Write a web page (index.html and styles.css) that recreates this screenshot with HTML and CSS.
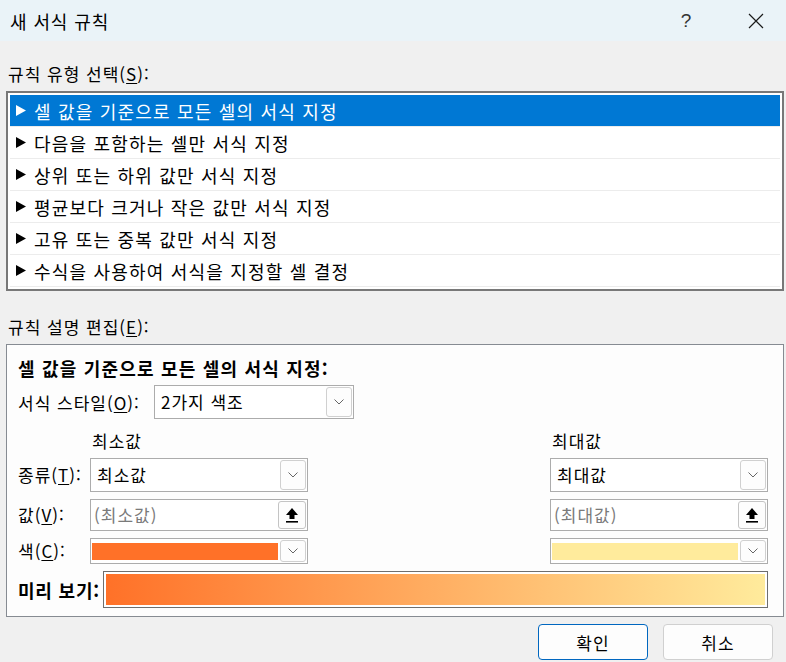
FILE: index.html
```html
<!DOCTYPE html>
<html lang="ko">
<head>
<meta charset="utf-8">
<title>새 서식 규칙</title>
<link rel="stylesheet" href="styles.css">
</head>
<body>
<div class="dialog">
  <div class="titlebar">
    <span class="title">새 서식 규칙</span>
    <span class="help">?</span>
    <span class="close">
      <svg width="16" height="16" viewBox="0 0 16 16"><path d="M1 1 L15 15 M15 1 L1 15" stroke="#1a1a1a" stroke-width="1.2" fill="none"/></svg>
    </span>
  </div>

  <div class="sect-label">규칙 유형 선택(<u>S</u>):</div>
  <div class="listbox">
    <div class="item selected"><svg class="tri" width="10" height="11" viewBox="0 0 10 11"><polygon points="0,0 10,5.5 0,11" fill="#fff"/></svg>셀 값을 기준으로 모든 셀의 서식 지정</div>
    <div class="item"><svg class="tri" width="10" height="11" viewBox="0 0 10 11"><polygon points="0,0 10,5.5 0,11" fill="#000"/></svg>다음을 포함하는 셀만 서식 지정</div>
    <div class="item"><svg class="tri" width="10" height="11" viewBox="0 0 10 11"><polygon points="0,0 10,5.5 0,11" fill="#000"/></svg>상위 또는 하위 값만 서식 지정</div>
    <div class="item"><svg class="tri" width="10" height="11" viewBox="0 0 10 11"><polygon points="0,0 10,5.5 0,11" fill="#000"/></svg>평균보다 크거나 작은 값만 서식 지정</div>
    <div class="item"><svg class="tri" width="10" height="11" viewBox="0 0 10 11"><polygon points="0,0 10,5.5 0,11" fill="#000"/></svg>고유 또는 중복 값만 서식 지정</div>
    <div class="item"><svg class="tri" width="10" height="11" viewBox="0 0 10 11"><polygon points="0,0 10,5.5 0,11" fill="#000"/></svg>수식을 사용하여 서식을 지정할 셀 결정</div>
  </div>

  <div class="sect-label second">규칙 설명 편집(<u>E</u>):</div>
  <div class="descbox">
    <div class="dtitle">셀 값을 기준으로 모든 셀의 서식 지정:</div>
    <div class="style-row">
      <span class="style-label">서식 스타일(<u>O</u>):</span>
      <div class="combo style-combo">
        <span class="val">2가지 색조</span>
        <span class="dd"><svg width="10" height="6" viewBox="0 0 10 6"><polyline points="0.5,0.5 5,5 9.5,0.5" fill="none" stroke="#666" stroke-width="1"/></svg></span>
      </div>
    </div>

    <div class="grid">
      <span></span>
      <span class="colhead">최소값</span>
      <span></span>
      <span class="colhead">최대값</span>

      <span class="rlabel">종류(<u>T</u>):</span>
      <div class="combo">
        <span class="val">최소값</span>
        <span class="dd"><svg width="10" height="6" viewBox="0 0 10 6"><polyline points="0.5,0.5 5,5 9.5,0.5" fill="none" stroke="#666" stroke-width="1"/></svg></span>
      </div>
      <span></span>
      <div class="combo">
        <span class="val">최대값</span>
        <span class="dd"><svg width="10" height="6" viewBox="0 0 10 6"><polyline points="0.5,0.5 5,5 9.5,0.5" fill="none" stroke="#666" stroke-width="1"/></svg></span>
      </div>

      <span class="rlabel">값(<u>V</u>):</span>
      <div class="combo field">
        <span class="val ph">(최소값)</span>
        <span class="dd up"><svg width="14" height="16" viewBox="0 0 14 16"><polygon points="7,1 13,8 9.5,8 9.5,12 4.5,12 4.5,8 1,8" fill="#000"/><rect x="1" y="14" width="12" height="1.6" fill="#000"/></svg></span>
      </div>
      <span></span>
      <div class="combo field">
        <span class="val ph">(최대값)</span>
        <span class="dd up"><svg width="14" height="16" viewBox="0 0 14 16"><polygon points="7,1 13,8 9.5,8 9.5,12 4.5,12 4.5,8 1,8" fill="#000"/><rect x="1" y="14" width="12" height="1.6" fill="#000"/></svg></span>
      </div>

      <span class="rlabel">색(<u>C</u>):</span>
      <div class="combo color">
        <span class="swatch orange"></span>
        <span class="dd"><svg width="10" height="6" viewBox="0 0 10 6"><polyline points="0.5,0.5 5,5 9.5,0.5" fill="none" stroke="#666" stroke-width="1"/></svg></span>
      </div>
      <span></span>
      <div class="combo color">
        <span class="swatch yellow"></span>
        <span class="dd"><svg width="10" height="6" viewBox="0 0 10 6"><polyline points="0.5,0.5 5,5 9.5,0.5" fill="none" stroke="#666" stroke-width="1"/></svg></span>
      </div>
    </div>

    <div class="preview-row">
      <span class="plabel">미리 보기:</span>
      <div class="preview"><div class="grad"></div></div>
    </div>
  </div>

  <div class="buttons">
    <button class="btn primary">확인</button>
    <button class="btn">취소</button>
  </div>
</div>
</body>
</html>
```

FILE: styles.css
```css
* { box-sizing: border-box; }

html, body {
  margin: 0;
  padding: 0;
}

body {
  width: 786px;
  height: 662px;
  overflow: hidden;
  background: #f0f0f0;
  font-family: "Noto Sans CJK KR", "Noto Sans", sans-serif;
  font-size: 17px;
  color: #000;
  letter-spacing: 1px;
}

u { text-decoration: underline; text-underline-offset: 2px; }

.titlebar {
  height: 41px;
  background: #eaf3f8;
  display: flex;
  align-items: center;
  padding-left: 10px;
}

.title {
  font-size: 18px;
  letter-spacing: 0.9px;
  line-height: 20px;
}

.help {
  margin-left: auto;
  width: 20px;
  text-align: center;
  font-family: "Liberation Sans", sans-serif;
  font-size: 19px;
  color: #333;
  letter-spacing: 0;
}

.close {
  width: 46px;
  margin-left: 37px;
  margin-right: 7px;
  display: flex;
  justify-content: center;
  align-items: center;
}

.sect-label {
  margin: 23px 0 7px 8px;
  line-height: 20px;
  height: 20px;
}

.sect-label.second {
  margin-top: 26px;
}

.listbox {
  margin-left: 6px;
  width: 778px;
  border: 2px solid #787878;
  background: #fff;
  padding: 2px;
}

.item {
  height: 32px;
  border-bottom: 1px solid #ececec;
  display: flex;
  align-items: center;
  padding-left: 6px;
  line-height: 20px;
  font-size: 18px;
  letter-spacing: 1.2px;
}

.item .tri {
  margin-right: 8px;
  flex: none;
}

.item.selected {
  background: #0078d4;
  color: #fff;
}

.descbox {
  margin-left: 6px;
  width: 778px;
  height: 273px;
  border: 1px solid #868b92;
  background: #fdfdfd;
  padding: 12px 15px 0 11px;
}

.dtitle {
  font-weight: bold;
  font-size: 18px;
  line-height: 22px;
  height: 22px;
  letter-spacing: 1.2px;
}

.style-row {
  margin-top: 6px;
  display: flex;
  align-items: center;
}

.style-label {
  width: 136px;
}

.combo {
  display: flex;
  align-items: center;
  border: 1px solid #acacac;
  background: #fff;
  padding: 1px;
  height: 34px;
}

.style-combo {
  width: 200px;
}

.combo .val {
  flex: 1;
  padding-left: 5px;
  line-height: 20px;
}

.combo .val.ph {
  color: #7a7a7a;
  padding-left: 2px;
}

.combo .dd {
  width: 26px;
  height: 100%;
  border: 1px solid #d0d0d0;
  border-radius: 3px;
  background: #fdfdfd;
  display: flex;
  align-items: center;
  justify-content: center;
  flex: none;
}

.combo .dd.up {
  width: 28px;
  border-color: #c4c4c4;
}

.grid {
  margin-top: 12px;
  display: grid;
  grid-template-columns: 72px 218px 1fr 218px;
  grid-template-rows: 20px 34px 32px 26px;
  row-gap: 7px;
  align-items: center;
}

.colhead {
  padding-left: 2px;
  line-height: 20px;
}

.rlabel {
  line-height: 20px;
}

.combo.field {
  height: 32px;
}

.combo.color {
  height: 26px;
  padding: 3px 1px 3px 1px;
}

.combo.color .dd {
  height: 22px;
  margin-top: -1px;
  margin-bottom: -1px;
}

.swatch {
  flex: 1;
  height: 17px;
  margin-right: 2px;
}

.swatch.orange { background: #ff7128; }
.swatch.yellow { background: #ffeb9c; }

.preview-row {
  margin-top: 7px;
  display: flex;
  align-items: center;
}

.plabel {
  width: 85px;
  font-weight: bold;
  font-size: 18px;
  letter-spacing: 0.8px;
}

.preview {
  flex: 1;
  height: 37px;
  border: 1px solid #6e6e6e;
  padding: 2px 2px 2px 2px;
  background: #fff;
}

.grad {
  height: 100%;
  background: linear-gradient(to right, #ff7128, #ffeb9c);
}

.buttons {
  margin-top: 7px;
  display: flex;
  justify-content: flex-end;
  gap: 15px;
  padding-right: 13px;
}

.btn {
  width: 110px;
  height: 36px;
  border: 1px solid #d0d0d0;
  border-radius: 4px;
  background: #fdfdfd;
  font-family: "Noto Sans CJK KR", "Noto Sans", sans-serif;
  font-size: 17px;
  letter-spacing: 1px;
  color: #000;
  padding: 0;
}

.btn.primary {
  border-color: #0067c0;
}
```
